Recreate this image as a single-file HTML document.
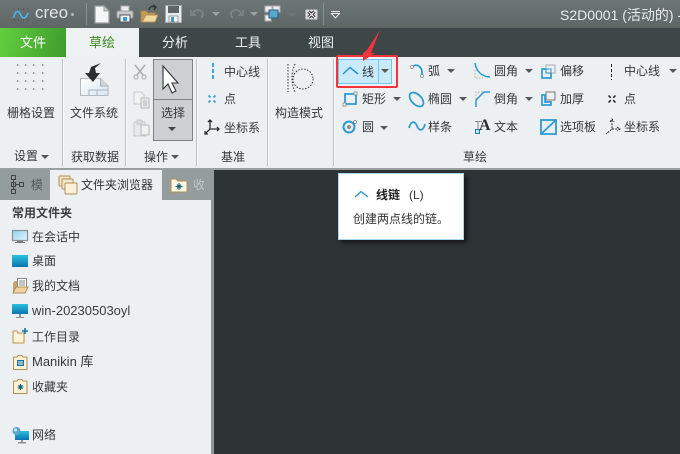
<!DOCTYPE html>
<html><head><meta charset="utf-8">
<style>
html,body{margin:0;padding:0}
body{position:relative;width:680px;height:454px;overflow:hidden;background:#2e3436;font-family:"Liberation Sans","Noto Sans CJK SC",sans-serif}
.a{position:absolute}
.t{position:absolute;font-size:12px;line-height:14px;white-space:nowrap;color:#33383b}
.d{position:absolute;width:2px;top:59px;height:107px;background:#bcc1c3;border-right:1px solid #f8f9f9;box-sizing:border-box}
.ar{position:absolute;width:0;height:0;border-left:4px solid transparent;border-right:4px solid transparent;border-top:4px solid #55595b}
svg{position:absolute;overflow:visible}
</style></head><body>
<div class="a" style="left:0;top:0;width:680px;height:28px;background:linear-gradient(#6e7575,#5f6666)"></div>
<div class="a" style="left:0;top:28px;width:680px;height:29px;background:#3e4648"></div>
<div class="a" style="left:0;top:28px;width:66px;height:29px;background:linear-gradient(100deg,#62ce3f,#3f9c2d)"></div>
<div class="a" style="left:66px;top:28px;width:73px;height:30px;background:#edf1f2"></div>
<div class="a" style="left:0;top:57px;width:680px;height:111px;background:#edf0f2"></div>
<div class="a" style="left:0;top:168px;width:680px;height:2px;background:#9a9fa1"></div>

<!-- title bar -->
<svg style="left:12px;top:8px" width="18" height="14"><path d="M1.500 1h1M6 1h1M11 1h1M15.500 1h1M1.500 12h1M6 12h1M11 12h1M15.500 12h1" stroke="#3c4244"/><path d="M1.500 10C3.500 2,6.500 2,8.500 6.500S13 12,16 5" fill="none" stroke="#46b4e6" stroke-width="1.700"/></svg>
<div class="t" style="left:35px;top:4px;font-size:17px;line-height:18px;color:#dfe3e3">creo</div>
<div class="a" style="left:71px;top:13px;width:3px;height:3px;border-radius:2px;background:#b5baba"></div>
<div class="a" style="left:86px;top:3px;width:1px;height:22px;background:#8b9191"></div>
<svg style="left:94px;top:5px" width="16" height="19"><path d="M1 1H10L15 6V18H1Z" fill="#f4f5f5" stroke="#9a9f9f" stroke-width="1.300"/><path d="M10 1V6H15Z" fill="#c8cccc" stroke="#9a9f9f"/></svg>
<svg style="left:116px;top:5px" width="18" height="18"><rect x="5" y="1" width="8" height="6" fill="#eee" stroke="#aaa"/><rect x="1" y="6" width="16" height="7" rx="1.500" fill="#c9cccc" stroke="#9ca1a1"/><rect x="4" y="10" width="10" height="7" fill="#f2f2f2" stroke="#555"/><rect x="7" y="12" width="4" height="4" fill="#3f9bd0"/></svg>
<svg style="left:140px;top:4px" width="19" height="19"><path d="M1 7H6L8 9H15V18H1Z" fill="#c79a55" stroke="#a58650"/><path d="M2 18L6 11H18L15 18Z" fill="#f3d9a0" stroke="#b09058"/><path d="M9 6C10 2,13 2,15 3M13 1L16 3L14 6" fill="none" stroke="#2f3435" stroke-width="1.400"/></svg>
<svg style="left:165px;top:5px" width="17" height="18"><rect x=".5" y=".5" width="16" height="17" fill="#e9ecec" stroke="#a3a8a8"/><rect x="3" y="1" width="11" height="7" fill="#5e6566"/><rect x="4" y="11" width="9" height="6" fill="#fff" stroke="#999"/><rect x="6" y="12" width="3" height="5" fill="#3f95c4"/></svg>
<svg style="left:190px;top:7px" width="16" height="13"><path d="M3 7A5 4 0 0 1 13 7C13 9 12 10 11 11M1 3V8H6" fill="none" stroke="#7f8585" stroke-width="1.800"/></svg>
<div class="ar" style="left:212px;top:12px;border-top-color:#9ea3a3"></div>
<svg style="left:228px;top:7px" width="16" height="13"><path d="M13 7A5 4 0 0 0 3 7C3 9 4 10 5 11M15 3V8H10" fill="none" stroke="#7f8585" stroke-width="1.800"/></svg>
<div class="ar" style="left:250px;top:12px;border-top-color:#9ea3a3"></div>
<svg style="left:264px;top:5px" width="17" height="17"><rect x="1" y="1" width="7" height="6" fill="#eee" stroke="#aaa"/><rect x="9" y="1" width="7" height="6" fill="#eee" stroke="#aaa"/><rect x="1" y="10" width="6" height="6" fill="#eee" stroke="#aaa"/><rect x="5" y="5" width="9" height="8" fill="#59a6cf" stroke="#2c5d78"/></svg>
<div class="ar" style="left:288px;top:13px;border-top-color:#6f7676"></div>
<svg style="left:305px;top:9px" width="14" height="12"><rect x=".5" y=".5" width="12" height="10" rx="1.500" fill="#d9dcdc" stroke="#9ca1a1"/><path d="M3.500 2.500L9.500 8.500M9.500 2.500L3.500 8.500" stroke="#2a2d2e" stroke-width="3.200"/><path d="M3.500 2.500L9.500 8.500M9.500 2.500L3.500 8.500" stroke="#fff" stroke-width="1.200"/></svg>
<div class="a" style="left:323px;top:3px;width:1px;height:22px;background:#8b9191"></div>
<div class="a" style="left:331px;top:11px;width:9px;height:1px;background:#eee"></div>
<svg style="left:331px;top:13px" width="9" height="6"><path d="M.5 .5H8.500L4.500 5Z" fill="#5f6666" stroke="#eee"/></svg>
<div class="t" style="left:560px;top:7px;font-size:14px;line-height:16px;color:#e8ecec">S2D0001 (活动的) -</div>

<!-- tabs -->
<div class="t" style="left:20px;top:36px;font-size:13px;color:#fff">文件</div>
<div class="t" style="left:89px;top:36px;font-size:13px;color:#3c8a1e">草绘</div>
<div class="t" style="left:162px;top:36px;font-size:13px;color:#f0f3f3">分析</div>
<div class="t" style="left:235px;top:36px;font-size:13px;color:#f0f3f3">工具</div>
<div class="t" style="left:308px;top:36px;font-size:13px;color:#f0f3f3">视图</div>

<!-- dividers -->
<div class="d" style="left:62px"></div><div class="d" style="left:125px"></div><div class="d" style="left:196px"></div><div class="d" style="left:267px"></div><div class="d" style="left:333px"></div>

<!-- left groups -->
<svg style="left:15px;top:64px" width="30" height="30"><path d="M2 1h1.300M10 1h1.300M18 1h1.300M27 1h1.300M2 9h1.300M10 9h1.300M18 9h1.300M27 9h1.300M2 17h1.300M10 17h1.300M18 17h1.300M27 17h1.300M2 25h1.300M10 25h1.300M18 25h1.300M27 25h1.300" stroke="#555" stroke-width="1.200"/></svg>
<div class="t" style="left:7px;top:106px">栅格设置</div>
<div class="t" style="left:14px;top:149px">设置</div><div class="ar" style="left:41px;top:155px"></div>
<svg style="left:79px;top:62px" width="30" height="34"><defs><linearGradient id="g" x1="0" y1="0" x2="1" y2="1"><stop offset="0" stop-color="#fff"/><stop offset="1" stop-color="#d5e6f1"/></linearGradient></defs><path d="M1.500 16.500H21.500L29 24V33.500H1.500Z" fill="url(#g)" stroke="#b4babd"/><path d="M21.500 16.500V24H29" fill="#cfd5d8" stroke="#a9afb2"/><path d="M10 33V28H29M18 28V33" fill="none" stroke="#a9afb2"/><path d="M22 1L12 5L10 11H6L14 20L21 11H17L16 6Z" fill="#2c2f30"/></svg>
<div class="t" style="left:70px;top:106px">文件系统</div>
<div class="t" style="left:71px;top:150px">获取数据</div>
<svg style="left:133px;top:64px" width="14" height="16"><path d="M2 1L10 11M12 1L4 11" stroke="#a6aaab" stroke-width="1.500"/><circle cx="3" cy="13" r="2" fill="none" stroke="#b9bdbe" stroke-width="1.400"/><circle cx="11" cy="13" r="2" fill="none" stroke="#b9bdbe" stroke-width="1.400"/></svg>
<svg style="left:133px;top:91px" width="17" height="18"><path d="M1 1H8L11 4V13H1Z" fill="#f1f2f2" stroke="#c6c9ca"/><rect x="8" y="7" width="8" height="10" fill="#e6e8e8" stroke="#b6babb"/><path d="M10 10H14M10 12H14M10 14H14" stroke="#b6babb"/></svg>
<svg style="left:133px;top:119px" width="17" height="20"><rect x="1" y="3" width="11" height="14" fill="#e7e9e9" stroke="#c6c9ca"/><rect x="4" y="1" width="5" height="4" fill="#ddd" stroke="#c6c9ca"/><rect x="8" y="6" width="8" height="10" fill="#eff0f0" stroke="#b6babb"/></svg>
<div class="a" style="left:153px;top:59px;width:40px;height:82px;background:#cdd0d2;border:1px solid #7e8284;box-sizing:border-box"></div>
<div class="a" style="left:153px;top:99px;width:40px;height:1px;background:#7e8284"></div>
<svg style="left:161px;top:65px" width="18" height="30"><path d="M2 1V24L7 19L11 28L15 26L11 18H17Z" fill="#fff" stroke="#333" stroke-width="1.100"/></svg>
<div class="t" style="left:161px;top:106px">选择</div>
<div class="ar" style="left:168px;top:127px;border-top-color:#444"></div>
<div class="t" style="left:144px;top:150px">操作</div><div class="ar" style="left:171px;top:155px"></div>

<!-- datum -->
<div class="a" style="left:212px;top:63px;width:2px;height:18px;background:repeating-linear-gradient(#3ea6dc 0 4px,transparent 4px 6px)"></div>
<div class="t" style="left:224px;top:65px">中心线</div>
<svg style="left:207px;top:94px" width="10" height="10"><path d="M1.500 1.500L3.500 3.500M8.500 1.500L6.500 3.500M1.500 8.500L3.500 6.500M8.500 8.500L6.500 6.500" stroke="#2f9ad4" stroke-width="1.600"/></svg>
<div class="t" style="left:224px;top:92px">点</div>
<svg style="left:203px;top:119px" width="17" height="17"><path d="M7 1V10L2 15M7 10H16M5 3L7 1L9 3M14 8L16 10L14 12M2 12V15H5" fill="none" stroke="#2c2f30" stroke-width="1.300"/></svg>
<div class="t" style="left:224px;top:121px">坐标系</div>
<div class="t" style="left:221px;top:150px">基准</div>

<!-- construct -->
<svg style="left:286px;top:64px" width="30" height="32"><circle cx="17" cy="15" r="10" fill="none" stroke="#333" stroke-dasharray="1.500 1.500"/><path d="M9 0Q3 14 9 28M2 0V28" fill="none" stroke="#333" stroke-dasharray="1.500 1.500"/></svg>
<div class="t" style="left:275px;top:106px">构造模式</div>

<!-- line button -->
<div class="a" style="left:338px;top:59px;width:54px;height:25px;background:#c9eafb;border:1px solid #74c6ef;box-sizing:border-box"></div>
<div class="a" style="left:378px;top:59px;width:1px;height:25px;background:#74c6ef"></div>
<svg style="left:342px;top:66px" width="17" height="9"><path d="M1 8L8 1.500L16 8" fill="none" stroke="#2b95cf" stroke-width="1.500"/></svg>
<div class="t" style="left:362px;top:65px;color:#2e3335">线</div>
<div class="ar" style="left:381px;top:69px;border-top-color:#55595b"></div>
<div class="a" style="left:336px;top:55px;width:62px;height:33px;border:2px solid #f2333b;border-radius:2px;box-sizing:border-box"></div>
<svg style="left:358px;top:28px" width="26" height="34"><path d="M22 2L13 25H17L5 33L5 25L9 22Z" fill="#f2333b"/></svg>

<!-- sketch col 1 -->
<svg style="left:342px;top:92px" width="16" height="15"><path d="M3 2H14V12H3Z" fill="none" stroke="#2c9bd3" stroke-width="1.800"/><rect x="12" y="0" width="3" height="3" fill="#fff" stroke="#777" stroke-width=".7"/><rect x="1" y="11" width="3" height="3" fill="#fff" stroke="#777" stroke-width=".7"/></svg>
<div class="t" style="left:362px;top:92px">矩形</div><div class="ar" style="left:393px;top:97px"></div>
<svg style="left:342px;top:120px" width="16" height="16"><circle cx="7" cy="7" r="5.500" fill="none" stroke="#2c9bd3" stroke-width="2"/><circle cx="7" cy="7" r="1.300" fill="none" stroke="#555"/><circle cx="13" cy="2" r="1.500" fill="#fff" stroke="#777" stroke-width=".7"/></svg>
<div class="t" style="left:362px;top:120px">圆</div><div class="ar" style="left:380px;top:126px"></div>

<!-- col 2 -->
<svg style="left:409px;top:63px" width="16" height="16"><path d="M3 4C7 0,14 3,13 12" fill="none" stroke="#2c9bd3" stroke-width="1.800"/><circle cx="3" cy="4" r="1.500" fill="#fff" stroke="#777" stroke-width=".7"/><circle cx="13" cy="13" r="1.500" fill="#fff" stroke="#777" stroke-width=".7"/></svg>
<div class="t" style="left:428px;top:64px">弧</div><div class="ar" style="left:447px;top:69px"></div>
<svg style="left:408px;top:91px" width="17" height="17"><ellipse cx="8.500" cy="8.500" rx="5" ry="8.500" transform="rotate(-45 8.500 8.500)" fill="none" stroke="#2c9bd3" stroke-width="1.700"/></svg>
<div class="t" style="left:428px;top:92px">椭圆</div><div class="ar" style="left:459px;top:97px"></div>
<svg style="left:408px;top:120px" width="18" height="13"><path d="M1 8C3 0,7 1,9 6S15 12,17 4" fill="none" stroke="#2c9bd3" stroke-width="1.700"/></svg>
<div class="t" style="left:428px;top:120px">样条</div>

<!-- col 3 -->
<svg style="left:474px;top:62px" width="17" height="17"><path d="M1 1C2 9,8 15,16 15" fill="none" stroke="#2c9bd3" stroke-width="1.500"/><path d="M1 8V16H9" fill="none" stroke="#aaa" stroke-dasharray="1.500 1.500"/></svg>
<div class="t" style="left:494px;top:64px">圆角</div><div class="ar" style="left:525px;top:69px"></div>
<svg style="left:474px;top:91px" width="17" height="17"><path d="M2 16V9L10 1H16" fill="none" stroke="#2c9bd3" stroke-width="1.500"/><path d="M2 8V1H9" fill="none" stroke="#aaa" stroke-dasharray="1.500 1.500"/></svg>
<div class="t" style="left:494px;top:92px">倒角</div><div class="ar" style="left:525px;top:97px"></div>
<svg style="left:475px;top:121px" width="14" height="13"><path d="M0 .5H7M3 .5V8" stroke="#888" fill="none"/><rect x=".5" y="8.500" width="4" height="4" fill="#bfe2f3" stroke="#1f7fae"/></svg>
<div class="t" style="left:479px;top:117px;font:bold 16px/18px 'Liberation Serif',serif;color:#2c2f30">A</div>
<div class="t" style="left:494px;top:120px">文本</div>

<!-- col 4 -->
<svg style="left:541px;top:64px" width="15" height="15"><path d="M5 1H14V9H5Z" fill="none" stroke="#b5b8ba" stroke-width="1.300"/><path d="M5 5H1V14H10V9" fill="none" stroke="#2c9bd3" stroke-width="1.700"/><path d="M5 5H10V9H5Z" fill="none" stroke="#2c9bd3" stroke-width="1"/></svg>
<div class="t" style="left:560px;top:64px">偏移</div>
<svg style="left:541px;top:91px" width="15" height="15"><path d="M5 9V1H14V9Z" fill="none" stroke="#777" stroke-width="1"/><path d="M4 4H1V14H10V11H4Z" fill="none" stroke="#2c9bd3" stroke-width="1.700"/></svg>
<div class="t" style="left:560px;top:92px">加厚</div>
<svg style="left:540px;top:119px" width="17" height="16"><rect x="1" y="1" width="15" height="14" fill="none" stroke="#2c9bd3" stroke-width="1.800"/><path d="M1 15L16 1" stroke="#2c9bd3" stroke-width="1.800"/></svg>
<div class="t" style="left:560px;top:120px">选项板</div>

<!-- col 5 -->
<div class="a" style="left:611px;top:64px;width:1px;height:16px;background:repeating-linear-gradient(#222 0 3px,transparent 3px 5px)"></div>
<div class="t" style="left:624px;top:64px">中心线</div><div class="ar" style="left:669px;top:69px"></div>
<svg style="left:607px;top:94px" width="10" height="10"><path d="M1.500 1.500L3.800 3.800M8.500 1.500L6.200 3.800M1.500 8.500L3.800 6.200M8.500 8.500L6.200 6.200" stroke="#222" stroke-width="1.500"/></svg>
<div class="t" style="left:624px;top:92px">点</div>
<svg style="left:604px;top:118px" width="17" height="17"><path d="M8 2V11L2 16M8 11H16M6 4L8 1L10 4M13 9L16 11L13 13" fill="none" stroke="#222" stroke-dasharray="2 1.200"/></svg>
<div class="t" style="left:624px;top:120px">坐标系</div>
<div class="t" style="left:463px;top:150px">草绘</div>

<!-- left panel -->
<div class="a" style="left:0;top:170px;width:211px;height:284px;background:#edf0f2"></div>
<div class="a" style="left:211px;top:170px;width:3px;height:284px;background:#8f9799"></div>
<div class="a" style="left:0;top:170px;width:50px;height:30px;background:#959c9e"></div>
<div class="a" style="left:162px;top:170px;width:52px;height:30px;background:#959c9e"></div>
<div class="a" style="left:50px;top:170px;width:112px;height:30px;background:#edf0f2"></div>
<svg style="left:10px;top:174px" width="15" height="21"><path d="M3.500 5V16M6 10.500H9" stroke="#444" fill="none"/><rect x="1.500" y="1.500" width="4" height="4" fill="none" stroke="#444"/><rect x="1.500" y="8.500" width="4" height="4" fill="none" stroke="#444"/><rect x="1.500" y="15.500" width="4" height="4" fill="none" stroke="#444"/><rect x="9.500" y="8.500" width="4" height="4" fill="none" stroke="#444"/></svg>
<div class="t" style="left:31px;top:178px;color:#555a5b;width:11px;overflow:hidden">模</div>
<svg style="left:58px;top:175px" width="20" height="20"><rect x="1" y="1" width="11" height="10" rx="1" fill="#f3e4c2" stroke="#b0905a"/><rect x="4" y="4" width="11" height="10" rx="1" fill="#f5e8cb" stroke="#b0905a"/><rect x="7" y="8" width="12" height="11" rx="1" fill="#fbf0d7" stroke="#b0905a"/></svg>
<div class="t" style="left:81px;top:178px;color:#2f3336">文件夹浏览器</div>
<svg style="left:170px;top:178px" width="18" height="15"><path d="M1 1H6L8 3H17V14H1Z" fill="#fdf6e3" stroke="#b0905a"/><path d="M9 5V12M5.500 8.500H12.500M7 6.500L11 10.500M11 6.500L7 10.500" stroke="#14607f"/></svg>
<div class="t" style="left:193px;top:178px;color:#c3c7c8;width:11px;overflow:hidden">收</div>
<div class="t" style="left:12px;top:206px;font-weight:bold;color:#3a3f42">常用文件夹</div>

<svg style="left:12px;top:230px" width="17" height="14"><defs><linearGradient id="m" x1="0" y1="0" x2="1" y2="1"><stop offset="0" stop-color="#8fd0ef"/><stop offset="1" stop-color="#e4f5fd"/></linearGradient></defs><rect x=".5" y=".5" width="15" height="10" fill="url(#m)" stroke="#8a8f92" stroke-width="1.200"/><path d="M5 11H11V12H13V13H3V12H5Z" fill="#777"/></svg>
<div class="t" style="left:32px;top:230px">在会话中</div>
<div class="a" style="left:12px;top:255px;width:16px;height:12px;background:linear-gradient(#2cc0de,#0d72b0)"></div>
<div class="t" style="left:32px;top:254px">桌面</div>
<svg style="left:12px;top:278px" width="17" height="16"><path d="M1 15V5L3 3H6V15Z" fill="#c9a468"/><rect x="5.500" y=".5" width="9" height="10" fill="#fff" stroke="#888"/><path d="M7 3H13M7 5H13M7 7H13" stroke="#888"/><path d="M1 15L4 9H16L13 15Z" fill="#eed3a0" stroke="#b0905a"/></svg>
<div class="t" style="left:32px;top:279px">我的文档</div>
<svg style="left:12px;top:304px" width="16" height="15"><defs><linearGradient id="w" x1="0" y1="0" x2="0" y2="1"><stop offset="0" stop-color="#2cc0de"/><stop offset="1" stop-color="#0d72b0"/></linearGradient></defs><rect width="16" height="10" fill="url(#w)"/><rect x="7" y="10" width="2" height="3" fill="#8a9296"/><rect x="4" y="13" width="8" height="1" fill="#8a9296"/></svg>
<div class="t" style="left:32px;top:304px;font-size:13px;color:#3a3f42">win-20230503oyl</div>
<svg style="left:12px;top:328px" width="17" height="16"><path d="M1 15V4Q1 3 2 3H5L6 5H12V15Z" fill="#fdf3d8" stroke="#c9a66a" stroke-width="1.300"/><path d="M13 0V6M10 3H16" stroke="#1179a8" stroke-width="1.600"/></svg>
<div class="t" style="left:32px;top:330px">工作目录</div>
<svg style="left:13px;top:355px" width="15" height="15"><path d="M.5 14.500V2H4L5 .5H9L10 2H14V14.500Z" fill="#fbf1d6" stroke="#b0905a"/><rect x="4" y="5" width="7" height="6" fill="#1c6f9e"/><path d="M5 7H10M5 9H10" stroke="#fff"/></svg>
<div class="t" style="left:32px;top:355px;font-size:13px;line-height:14px">Manikin 库</div>
<svg style="left:13px;top:379px" width="15" height="15"><path d="M.5 14.500V2H4L5 .5H9L10 2H14V14.500Z" fill="#fbf1d6" stroke="#b0905a"/><path d="M7.500 5V11M4.500 8H10.500M5.500 6L9.500 10M9.500 6L5.500 10" stroke="#14607f"/></svg>
<div class="t" style="left:32px;top:380px">收藏夹</div>
<svg style="left:12px;top:427px" width="17" height="17"><rect x="3" y="4" width="14" height="9" fill="url(#w)"/><rect x="9" y="13" width="2" height="2" fill="#8a9296"/><rect x="6" y="15" width="8" height="1.500" fill="#8a9296"/><circle cx="4.500" cy="4" r="4" fill="#5aa5c8"/><circle cx="3.500" cy="3" r="1.500" fill="#cfe8f3"/></svg>
<div class="t" style="left:32px;top:428px">网络</div>

<!-- tooltip -->
<div class="a" style="left:338px;top:173px;width:126px;height:67px;background:#fff;border:1px solid #a9d5ea;box-sizing:border-box;box-shadow:3px 3px 4px rgba(0,0,0,.55)"></div>
<svg style="left:354px;top:190px" width="16" height="9"><path d="M1 7L7 1.500L14 7" fill="none" stroke="#2b95cf" stroke-width="1.300"/></svg>
<div class="t" style="left:376px;top:188px;font-weight:bold;color:#222">线链</div>
<div class="t" style="left:409px;top:188px;color:#333">(L)</div>
<div class="t" style="left:353px;top:212px;color:#333">创建两点线的链。</div>
</body></html>
